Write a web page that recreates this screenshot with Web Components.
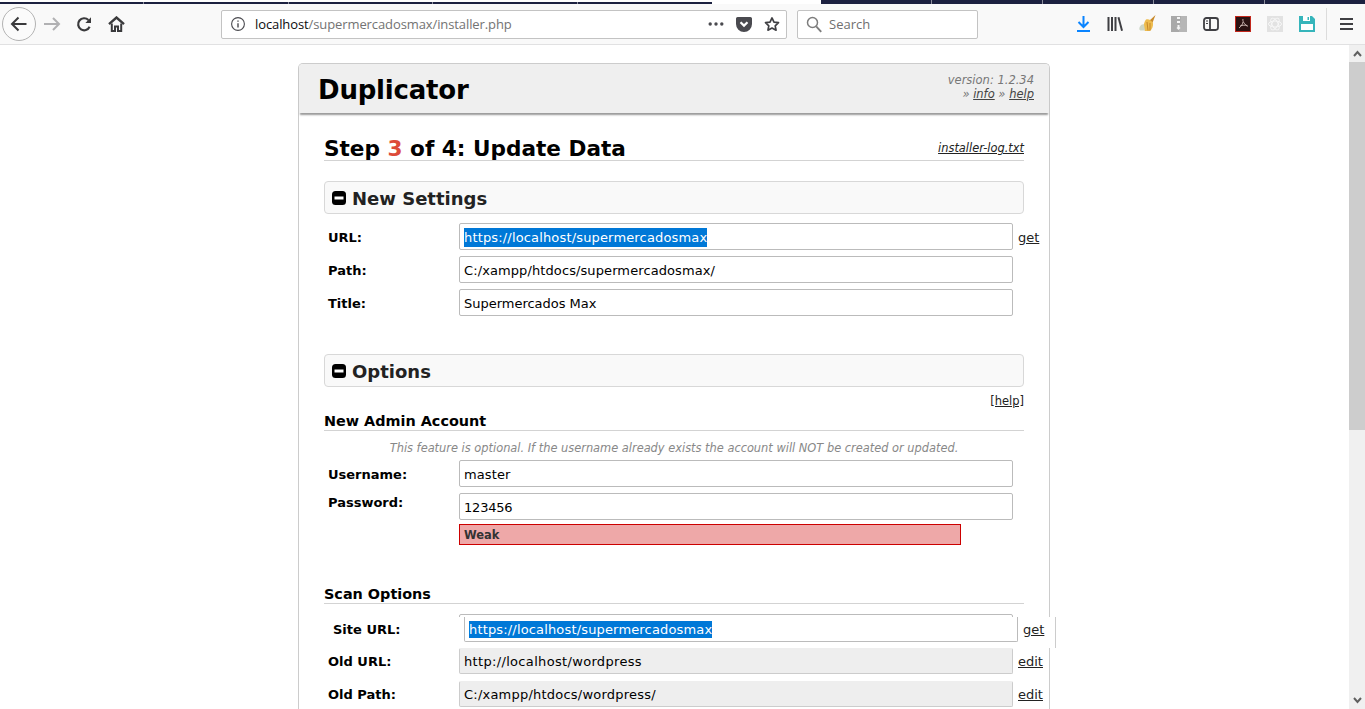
<!DOCTYPE html>
<html>
<head>
<meta charset="utf-8">
<title>Duplicator installer</title>
<style>
html, body { margin: 0; height: 100%; overflow: hidden; background: #fff; }
body { display: flex; flex-direction: column; font-family: "DejaVu Sans", Verdana, sans-serif; font-size: 13px; color: #000; }
</style>
</head>
<body>
<browser-toolbar url-host="localhost" url-path="/supermercadosmax/installer.php"></browser-toolbar>
<page-view>
  <installer-card version="version: 1.2.34">
    <step-heading step="3" log="installer-log.txt"></step-heading>

    <section-bar title="New Settings"></section-bar>
    <form-row label="URL:" value="https://localhost/supermercadosmax" link="get" selected style="--track:.16px"></form-row>
    <form-row label="Path:" value="C:/xampp/htdocs/supermercadosmax/"></form-row>
    <form-row label="Title:" value="Supermercados Max" style="--track:-.02px"></form-row>

    <section-bar title="Options" class="options"></section-bar>
    <help-link></help-link>
    <sub-title title="New Admin Account"></sub-title>
    <note-line>This feature is optional. If the username already exists the account will NOT be created or updated.</note-line>
    <form-row label="Username:" value="master"></form-row>
    <form-row label="Password:" value="123456" label-top style="--track:-.2px"></form-row>
    <strength-bar>Weak</strength-bar>

    <sub-title title="Scan Options" class="scan"></sub-title>
    <shifted-row label="Site URL:" value="https://localhost/supermercadosmax" link="get" style="--track:.16px"></shifted-row>
    <form-row label="Old URL:" value="http://localhost/wordpress" link="edit" readonly style="--track:.33px"></form-row>
    <form-row label="Old Path:" value="C:/xampp/htdocs/wordpress/" link="edit" readonly style="--track:.22px"></form-row>
  </installer-card>
</page-view>

<script>
class browserToolbar extends HTMLElement {
    constructor() {
        super();
        this.attachShadow({ mode: 'open' });
    }

    connectedCallback() {
        this.shadowRoot.innerHTML = `
        <style>
        :host { display: block; flex: none; height: 45px; box-sizing: border-box; background: #f9f9f9; border-bottom: 1px solid #e1e1e2; font-family: "Open Sans", "Noto Sans", sans-serif; }
        .tabs { height: 4px; display: flex; background: #fff; }
        .tabs div { box-sizing: border-box; height: 2px; margin-top: 2px; }
        .tabs .a { width: 712px; background: repeating-linear-gradient(90deg, #1c2140 0 143.500px, #8b8d9c 143.500px 144.500px); }
        .tabs .gap { width: 109px; background: none; }
        .tabs .b { flex: 1; height: 4px; margin-top: 0; background: repeating-linear-gradient(90deg, #1c2140 0 110px, #8b8d9c 110px 111px); }
        .bar { display: flex; align-items: center; height: 40px; }
        .back { width: 32px; height: 32px; margin-left: 2px; border: 1px solid #b3b3b3; border-radius: 50%; background: #fbfbfb; display: flex; align-items: center; justify-content: center; flex: none; }
        .slot { width: 32px; height: 32px; display: flex; align-items: center; justify-content: center; flex: none; }
        .field { box-sizing: border-box; height: 29px; background: #fff; border: 1px solid #c3c3c3; border-radius: 2px; display: flex; align-items: center; flex: none; font-size: 13px; }
        .url { width: 566px; padding-left: 8px; }
        .url .host { color: #0c0c0d; }
        .url .path { color: #737373; }
        .url .addr { margin-left: 9px; flex: 1; letter-spacing: -0.1px; }
        .url svg.info { flex: none; }
        .url .act { display: flex; align-items: center; gap: 12px; margin-right: 6px; }
        .search { width: 181px; margin-left: 10px; padding-left: 8px; color: #6f6f6f; }
        .search span { margin-left: 7px; }
        .tools { display: flex; margin-left: 89px; }
        .divider { width: 1px; height: 32px; background: #dcdcdc; margin: 0 3px; flex: none; }
        </style>
        <div class="tabs"><div class="a"></div><div class="gap"></div><div class="b"></div></div>
        <div class="bar">
            <div class="back">
                <svg width="20" height="20" viewBox="0 0 20 20" fill="none" stroke="#3a3a3c" stroke-width="2"><path d="M17.5 10H3M9.500 3.500L3 10l6.500 6.500"/></svg>
            </div>
            <div class="slot">
                <svg width="18" height="16" viewBox="0 0 18 16" fill="none" stroke="#b1b1b3" stroke-width="2"><path d="M1 8h15M10 2l6 6-6 6"/></svg>
            </div>
            <div class="slot">
                <svg width="17" height="17" viewBox="0 0 17 17" fill="none" stroke="#3a3a3c" stroke-width="2.200"><path d="M13.600 10.800A6 6 0 1 1 12.400 4"/><path d="M15 1.200V7H9.400z" fill="#3a3a3c" stroke="none"/></svg>
            </div>
            <div class="slot" style="margin-right:89px">
                <svg width="17" height="16" viewBox="0 0 17 16" fill="none" stroke="#3a3a3c"><path d="M1 8.200L8.500 1.500 16 8.200" stroke-width="2.400"/><path d="M3.800 7.500V15H7V10.500h3V15h3.200V7.500" stroke-width="2"/></svg>
            </div>
            <div class="field url">
                <svg class="info" width="16" height="16" viewBox="0 0 16 16" fill="none" stroke="#4a4a4f" stroke-width="1.100"><circle cx="8" cy="8" r="6.400"/><path d="M8 7.200v4.200M8 4.400v1.400" stroke-width="1.400"/></svg>
                <div class="addr"><span class="host">${this.getAttribute('url-host')}</span><span class="path">${this.getAttribute('url-path')}</span></div>
                <div class="act">
                    <svg width="16" height="4" viewBox="0 0 16 4" fill="#4a4a4f"><circle cx="2.200" cy="2" r="1.700"/><circle cx="8" cy="2" r="1.700"/><circle cx="13.800" cy="2" r="1.700"/></svg>
                    <svg width="16" height="15" viewBox="0 0 16 15"><path d="M1.600 0h12.800A1.600 1.600 0 0 1 16 1.600V7A8 8 0 0 1 0 7V1.600A1.600 1.600 0 0 1 1.600 0z" fill="#4a4a4f"/><path d="M4.500 5.200L8 8.600l3.500-3.400" fill="none" stroke="#fff" stroke-width="2.200"/></svg>
                    <svg width="16" height="16" viewBox="0 0 17 16" fill="none" stroke="#3f3f43" stroke-width="1.800"><path d="M8.500 1.600l2.100 4.400 4.800.6-3.500 3.300.9 4.700-4.300-2.300-4.300 2.300.9-4.700-3.500-3.300 4.800-.6z" stroke-linejoin="round"/></svg>
                </div>
            </div>
            <div class="field search">
                <svg width="16" height="17" viewBox="0 0 16 17" fill="none" stroke="#7d7d7d" stroke-width="1.500"><circle cx="6.500" cy="6.500" r="5"/><path d="M10.200 10.400l5 5.400" stroke-width="1.900"/></svg>
                <span>Search</span>
            </div>
            <div class="tools">
                <div class="slot"><svg width="13" height="16" viewBox="0 0 13 16" fill="none" stroke="#0a84ff" stroke-width="2"><path d="M6.500 0v10.500M1.500 6l5 5 5-5"/><path d="M0 15h13"/></svg></div>
                <div class="slot"><svg width="16" height="14" viewBox="0 0 16 14" fill="#3f3f43"><rect x="0.500" width="2" height="14"/><rect x="4" width="2" height="14"/><rect x="7.500" width="2" height="14"/><path d="M10.500 0.400L12.400 0 16 13.400l-1.900.6z"/></svg></div>
                <div class="slot"><svg width="17" height="18" viewBox="0 0 17 18"><path d="M16.500 0L10 6l3 3z" fill="#c98a2b"/><path d="M7 4.500c2-1 5 0 7 3.500 .5 3-1 6.500-3 8H6C4 14 4 8.500 7 4.500z" fill="#eebc4e"/><path d="M8 7l1 8.500M11 8v7.500" stroke="#c4872a" fill="none"/><path d="M1 11.500c1-2 3-2.500 4-2l1 6H2C0 15.500 0 13 1 11.500z" fill="#cdd6c6"/></svg></div>
                <div class="slot"><svg width="16" height="16" viewBox="0 0 16 16"><rect width="16" height="16" fill="#a9a9a9"/><path d="M10 0h6v16H8z" fill="#c0c0c0" opacity=".6"/><path d="M6 1h3v2H6zM6 5h3v2H6zM6.500 9h2v2l1 1-2 2-2-2 1-1z" fill="#f4f4f4"/></svg></div>
                <div class="slot"><svg width="16" height="14" viewBox="0 0 16 14" fill="none" stroke="#3f3f43" stroke-width="1.800"><rect x="1" y="1" width="14" height="12" rx="2.400"/><path d="M7 1v12"/><path d="M3 4h2M3 6.500h2" stroke-width="1.200"/></svg></div>
                <div class="slot"><svg width="16" height="16" viewBox="0 0 16 16"><rect x=".5" y=".5" width="15" height="15" fill="#2a1212" stroke="#c2261b"/><path d="M8 3c-.6 2 .8 4.500 4.500 7.500M8 6c-.5 2.500-2 4.500-4 6M5 10c2.500-1 5-1 7.500-.5" fill="none" stroke="#d9c5c0" stroke-width=".9"/></svg></div>
                <div class="slot"><svg width="16" height="16" viewBox="0 0 16 16"><rect width="16" height="16" fill="#e2e2e2"/><g fill="none" stroke="#f7f7f7" stroke-width="1"><ellipse cx="8" cy="8" rx="6.500" ry="3"/><ellipse cx="8" cy="8" rx="6.500" ry="3" transform="rotate(60 8 8)"/><ellipse cx="8" cy="8" rx="6.500" ry="3" transform="rotate(120 8 8)"/></g></svg></div>
                <div class="slot"><svg width="16" height="16" viewBox="0 0 16 16"><path d="M0 0h13l3 3v13H0z" fill="#36b5bb"/><rect x="2" y="8" width="12" height="6" fill="#fff"/><rect x="4" width="7" height="5" fill="#fff"/><rect x="8.500" y="1" width="1.500" height="3" fill="#36b5bb"/></svg></div>
            </div>
            <div class="divider"></div>
            <div class="slot">
                <svg width="13" height="12" viewBox="0 0 13 12" fill="#3f3f43"><rect width="13" height="2"/><rect y="5" width="13" height="2"/><rect y="10" width="13" height="2"/></svg>
            </div>
        </div>
        `;
    }
}

class pageView extends HTMLElement {
    constructor() {
        super();
        this.attachShadow({ mode: 'open' });
    }

    connectedCallback() {
        this.shadowRoot.innerHTML = `
        <style>
        :host { display: flex; flex: 1; min-height: 0; overflow: hidden; }
        .content { flex: 1; min-width: 0; overflow: hidden; display: flex; justify-content: flex-start; padding: 18px 0 0 298px; box-sizing: border-box; }
        .bar { flex: none; width: 16px; background: #f0f0f0; display: flex; flex-direction: column; }
        .btn { height: 17px; flex: none; display: flex; align-items: center; justify-content: center; }
        .thumb { height: 368px; background: #cdcdcd; flex: none; }
        .rest { flex: 1; }
        </style>
        <div class="content"><slot></slot></div>
        <div class="bar">
            <div class="btn"><svg width="9" height="7" viewBox="0 0 9 7" fill="none" stroke="#606060" stroke-width="2"><path d="M1 6l3.500-4L8 6"/></svg></div>
            <div class="thumb"></div>
            <div class="rest"></div>
            <div class="btn"><svg width="9" height="7" viewBox="0 0 9 7" fill="none" stroke="#606060" stroke-width="2"><path d="M1 1l3.500 4L8 1"/></svg></div>
        </div>
        `;
    }
}

class installerCard extends HTMLElement {
    constructor() {
        super();
        this.attachShadow({ mode: 'open' });
    }

    connectedCallback() {
        this.shadowRoot.innerHTML = `
        <style>
        :host { display: block; flex: none; width: 752px; box-sizing: border-box; border: 1px solid #ccc; border-bottom: none; border-radius: 5px 5px 0 0; height: 800px; }
        header { display: flex; justify-content: space-between; height: 49px; background: #efefef; border-radius: 4px 4px 0 0; box-shadow: 0 3px 2px -1px #999; padding: 0 15px 0 19px; }
        h1 { margin: 0; font-size: 26px; font-weight: bold; line-height: 52px; color: #000; letter-spacing: -0.2px; }
        .meta { font-size: 11.500px; font-style: italic; color: #777; text-align: right; line-height: 14px; padding-top: 9px; }
        .meta a { color: #444; text-decoration: underline; }
        main { padding: 0 25px; }
        </style>
        <header>
            <h1>Duplicator</h1>
            <div class="meta">${this.getAttribute('version')}<br>&raquo; <a>info</a> &raquo; <a>help</a></div>
        </header>
        <main><slot></slot></main>
        `;
    }
}

class stepHeading extends HTMLElement {
    constructor() {
        super();
        this.attachShadow({ mode: 'open' });
    }

    connectedCallback() {
        this.shadowRoot.innerHTML = `
        <style>
        :host { display: flex; justify-content: space-between; align-items: flex-end; margin-top: 20px; height: 27px; border-bottom: 1px solid #d3d3d3; }
        .t { font-size: 21.600px; font-weight: bold; line-height: 22px; color: #000; }
        .t b { color: #dd4b39; }
        a { font-size: 11.400px; font-style: italic; color: #222; text-decoration: underline; line-height: 24px; }
        </style>
        <div class="t">Step <b>${this.getAttribute('step')}</b> of 4: Update Data</div>
        <a>${this.getAttribute('log')}</a>
        `;
    }
}

class sectionBar extends HTMLElement {
    constructor() {
        super();
        this.attachShadow({ mode: 'open' });
    }

    connectedCallback() {
        this.shadowRoot.innerHTML = `
        <style>
        :host { display: flex; align-items: center; box-sizing: border-box; height: 33px; margin: 20px 0 9px; padding-left: 7px; border: 1px solid #d8d8d8; border-radius: 4px; background: #f9f9f9; }
        :host(.options) { margin: 38px 0 0; }
        svg { flex: none; margin-right: 6px; }
        span { font-size: 18px; font-weight: bold; color: #222; padding-top: 2px; }
        </style>
        <svg width="14" height="14" viewBox="0 0 14 14"><rect width="14" height="14" rx="3.500" fill="#000"/><rect x="2.500" y="5.500" width="9" height="3" fill="#fff"/></svg>
        <span>${this.getAttribute('title')}</span>
        `;
    }
}

class helpLink extends HTMLElement {
    constructor() {
        super();
        this.attachShadow({ mode: 'open' });
    }

    connectedCallback() {
        this.shadowRoot.innerHTML = `
        <style>
        :host { display: block; text-align: right; font-size: 11.500px; line-height: 14px; margin-top: 7px; color: #222; }
        a { text-decoration: underline; }
        </style>
        <a>[help]</a>
        `;
    }
}

class subTitle extends HTMLElement {
    constructor() {
        super();
        this.attachShadow({ mode: 'open' });
    }

    connectedCallback() {
        this.shadowRoot.innerHTML = `
        <style>
        :host { display: block; box-sizing: border-box; height: 23px; border-bottom: 1px solid #d3d3d3; font-size: 14.400px; font-weight: bold; line-height: 27px; color: #000; }
        :host(.scan) { margin-top: 36px; }
        </style>
        ${this.getAttribute('title')}
        `;
    }
}

class noteLine extends HTMLElement {
    constructor() {
        super();
        this.attachShadow({ mode: 'open' });
    }

    connectedCallback() {
        this.shadowRoot.innerHTML = `
        <style>
        :host { display: block; text-align: center; font-size: 11.400px; font-style: italic; color: #888; line-height: 14px; margin: 10px 0 5px; }
        </style>
        <slot></slot>
        `;
    }
}

class formRow extends HTMLElement {
    constructor() {
        super();
        this.attachShadow({ mode: 'open' });
    }

    connectedCallback() {
        const value = this.getAttribute('value');
        const link = this.getAttribute('link');
        this.shadowRoot.innerHTML = `
        <style>
        :host { display: flex; height: 27px; margin-bottom: 6px; font-size: 13px; white-space: nowrap; }
        :host([readonly]) { height: 26px; margin-bottom: 7px; }
        label { flex: none; width: 135px; padding-left: 4px; box-sizing: border-box; font-weight: bold; line-height: 29px; }
        :host([label-top]) label { line-height: 19px; }
        :host([readonly]) label, :host([readonly]) a { line-height: 27px; }
        .input { box-sizing: border-box; flex: none; width: 554px; height: 27px; padding: 0 4px; background: #fff; border: 1px solid #bbb; border-radius: 2px; line-height: 27px; letter-spacing: var(--track, 0.1px); }
        :host([readonly]) .input { height: 26px; line-height: 25px; background: #eee; border-color: #eee #ccc #ccc #ccc; }
        mark { background: #0078d7; color: #fff; padding: 2px 0; }
        a { margin-left: 5px; line-height: 29px; text-decoration: underline; color: #222; }
        </style>
        <label>${this.getAttribute('label')}</label>
        <div class="input">${this.hasAttribute('selected') ? `<mark>${value}</mark>` : value}</div>
        ${link ? `<a>${link}</a>` : ''}
        `;
    }
}

class strengthBar extends HTMLElement {
    constructor() {
        super();
        this.attachShadow({ mode: 'open' });
    }

    connectedCallback() {
        this.shadowRoot.innerHTML = `
        <style>
        :host { display: block; box-sizing: border-box; width: 502px; height: 21px; margin: -2px 0 0 135px; padding-left: 4px; background: #eea8a8; border: 1px solid #c00; font-size: 11.500px; font-weight: bold; line-height: 21px; color: #333; }
        </style>
        <slot></slot>
        `;
    }
}

// the site url row sits 5px off in the reference, on top of the field under it
class shiftedRow extends HTMLElement {
    constructor() {
        super();
        this.attachShadow({ mode: 'open' });
    }

    connectedCallback() {
        this.shadowRoot.innerHTML = `
        <style>
        :host { display: block; position: relative; height: 34px; margin-top: 10px; font-size: 13px; }
        .under { box-sizing: border-box; width: 554px; height: 27px; margin-left: 135px; border: 1px solid #bbb; border-radius: 2px; }
        .over { position: absolute; left: 5px; top: 3px; width: 727px; height: 31px; box-sizing: border-box; display: flex; background: #fff; border-right: 1px solid #ccc; white-space: nowrap; }
        label { flex: none; width: 135px; padding-left: 4px; box-sizing: border-box; font-weight: bold; line-height: 25px; }
        .input { box-sizing: border-box; flex: none; width: 554px; height: 25px; padding: 0 4px; border: 1px solid #bbb; border-top: none; border-radius: 0 0 2px 2px; line-height: 26px; letter-spacing: var(--track, 0.1px); }
        mark { background: #0078d7; color: #fff; padding: 1px 0; }
        a { margin-left: 5px; line-height: 25px; text-decoration: underline; color: #222; }
        </style>
        <div class="under"></div>
        <div class="over">
            <label>${this.getAttribute('label')}</label>
            <div class="input"><mark>${this.getAttribute('value')}</mark></div>
            <a>${this.getAttribute('link')}</a>
        </div>
        `;
    }
}

customElements.define('browser-toolbar', browserToolbar);
customElements.define('page-view', pageView);
customElements.define('installer-card', installerCard);
customElements.define('step-heading', stepHeading);
customElements.define('section-bar', sectionBar);
customElements.define('help-link', helpLink);
customElements.define('sub-title', subTitle);
customElements.define('note-line', noteLine);
customElements.define('form-row', formRow);
customElements.define('strength-bar', strengthBar);
customElements.define('shifted-row', shiftedRow);
</script>
</body>
</html>
